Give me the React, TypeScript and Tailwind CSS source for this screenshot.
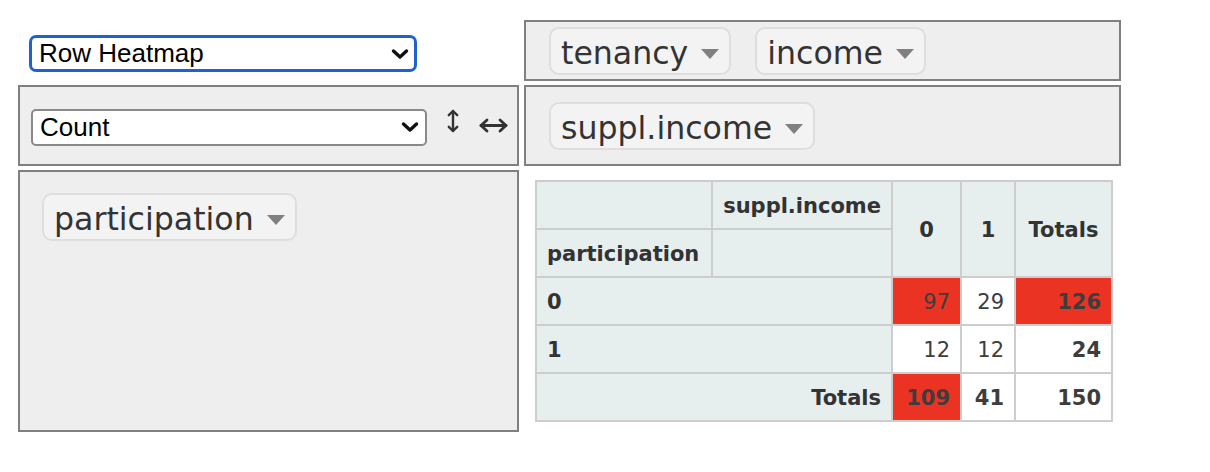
import React from 'react';

const Triangle = () => (
  <svg width="18" height="10" viewBox="0 0 18 10" className="ml-[13px] mt-[14px] shrink-0">
    <path d="M0 0 H18 L9 10 Z" fill="#808080" />
  </svg>
);

const Chip = ({ label }: { label: string }) => (
  <span className="inline-flex items-start h-[48px] pt-[6px] px-[10px] rounded-[10px] border-2 border-[#dedede] bg-[#f3f3f3] text-[31.6px] leading-[36px] text-[#333] whitespace-nowrap">
    <span>{label}</span>
    <Triangle />
  </span>
);

const Chevron = () => (
  <svg
    width="18"
    height="11"
    viewBox="0 0 18 11"
    fill="none"
    stroke="#111"
    strokeWidth="3.4"
    strokeLinecap="round"
    strokeLinejoin="round"
    className="pointer-events-none absolute right-[8px] top-1/2 -translate-y-1/2"
  >
    <path d="M2.5 2.5 L9 8.5 L15.5 2.5" />
  </svg>
);

const UpDown = () => (
  <svg width="12" height="24" viewBox="0 0 12 24" fill="none" stroke="#333" strokeWidth="2.4" strokeLinecap="round" strokeLinejoin="round">
    <path d="M6 2 V22" />
    <path d="M1.8 6.2 L6 2 L10.2 6.2" />
    <path d="M1.8 17.8 L6 22 L10.2 17.8" />
  </svg>
);

const LeftRight = () => (
  <svg width="29" height="15" viewBox="0 0 29 15" fill="none" stroke="#333" strokeWidth="2.8" strokeLinecap="round" strokeLinejoin="round">
    <path d="M2 7.5 H27" />
    <path d="M8 2 L2 7.5 L8 13" />
    <path d="M21 2 L27 7.5 L21 13" />
  </svg>
);

const th = 'bg-[#e6eeee] border-2 border-[#cdcdcd] px-[10px] pt-[11px] pb-[9px] font-bold text-[#333]';
const td = 'border-2 border-[#cdcdcd] px-[10px] pt-[11px] pb-[9px] text-right align-top text-[#3d3d3d]';
const hot = 'bg-[#ea3323]';

export default function App() {
  return (
    <div className="min-h-screen bg-white pt-[20px] pl-[18px]" style={{ fontFamily: '"DejaVu Sans", Verdana, sans-serif' }}>
      <div className="grid grid-cols-[501px_597px] grid-rows-[61px_81px_262px] gap-x-[5px] gap-y-[4px]">
        {/* renderer */}
        <div className="pl-[11px] pt-[15px]">
          <div className="relative w-[388px]">
            <select
              defaultValue="Row Heatmap"
              className="appearance-none w-full h-[37px] py-0 pl-[7px] bg-white border-[3px] border-[#1e62d0] rounded-[7px] text-[26px] leading-[29px] text-black outline-none"
              style={{ fontFamily: '"Liberation Sans", Arial, sans-serif' }}
            >
              <option>Table</option>
              <option>Row Heatmap</option>
              <option>Col Heatmap</option>
            </select>
            <Chevron />
          </div>
        </div>

        {/* unused attributes */}
        <div className="flex items-center gap-[24px] border-2 border-[#808080] bg-[#eeeeee] pl-[23px]">
          <Chip label="tenancy" />
          <Chip label="income" />
        </div>

        {/* aggregator */}
        <div className="flex items-center border-2 border-[#808080] bg-[#eeeeee] pl-[11px]">
          <div className="relative w-[396px] mt-[3px]">
            <select
              defaultValue="Count"
              className="appearance-none w-full h-[37px] py-0 pl-[7px] bg-white border-2 border-[#8a8a8a] rounded-[5px] text-[26px] leading-[31px] text-black outline-none"
              style={{ fontFamily: '"Liberation Sans", Arial, sans-serif' }}
            >
              <option>Count</option>
              <option>Sum</option>
              <option>Average</option>
            </select>
            <Chevron />
          </div>
          <span className="ml-[20px] -mt-[9px]">
            <UpDown />
          </span>
          <span className="ml-[20px]">
            <LeftRight />
          </span>
        </div>

        {/* column attributes */}
        <div className="flex items-center border-2 border-[#808080] bg-[#eeeeee] pl-[23px]">
          <Chip label="suppl.income" />
        </div>

        {/* row attributes */}
        <div className="border-2 border-[#808080] bg-[#eeeeee] pl-[22px] pt-[21px]">
          <Chip label="participation" />
        </div>

        {/* output */}
        <div className="pl-[11px] pt-[10px]">
          <table className="table-fixed w-[576px] border-collapse text-left text-[21px] leading-[26px]">
            <colgroup>
              <col className="w-[176px]" />
              <col className="w-[180px]" />
              <col className="w-[69px]" />
              <col className="w-[54px]" />
              <col className="w-[97px]" />
            </colgroup>
            <thead>
              <tr>
                <th className={th}></th>
                <th className={`${th} text-right`}>suppl.income</th>
                <th className={`${th} text-center`} rowSpan={2}>0</th>
                <th className={`${th} text-center`} rowSpan={2}>1</th>
                <th className={`${th} text-center`} rowSpan={2}>Totals</th>
              </tr>
              <tr>
                <th className={th}>participation</th>
                <th className={th}></th>
              </tr>
            </thead>
            <tbody>
              <tr>
                <th className={th} colSpan={2}>0</th>
                <td className={`${td} ${hot}`}>97</td>
                <td className={`${td} bg-white`}>29</td>
                <td className={`${td} ${hot} font-bold`}>126</td>
              </tr>
              <tr>
                <th className={th} colSpan={2}>1</th>
                <td className={`${td} bg-white`}>12</td>
                <td className={`${td} bg-white`}>12</td>
                <td className={`${td} bg-white font-bold`}>24</td>
              </tr>
              <tr>
                <th className={`${th} text-right`} colSpan={2}>Totals</th>
                <td className={`${td} ${hot} font-bold`}>109</td>
                <td className={`${td} bg-white font-bold`}>41</td>
                <td className={`${td} bg-white font-bold`}>150</td>
              </tr>
            </tbody>
          </table>
        </div>
      </div>
    </div>
  );
}
